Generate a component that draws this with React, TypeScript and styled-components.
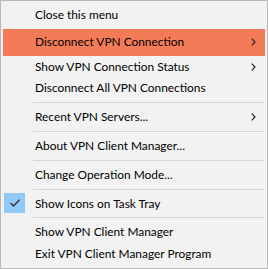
import React from 'react';
import styled, {createGlobalStyle} from 'styled-components';

const GlobalStyle = createGlobalStyle`
  html, body {
    margin: 0;
    padding: 0;
    background: #ffffff;
  }
`;

type Entry =
    | {kind: 'item'; label: string; submenu?: boolean; active?: boolean; checked?: boolean}
    | {kind: 'sep'};

const entries: Entry[] = [
    {kind: 'item', label: 'Close this menu'},
    {kind: 'item', label: 'Disconnect VPN Connection', submenu: true, active: true},
    {kind: 'item', label: 'Show VPN Connection Status', submenu: true},
    {kind: 'item', label: 'Disconnect All VPN Connections'},
    {kind: 'sep'},
    {kind: 'item', label: 'Recent VPN Servers...', submenu: true},
    {kind: 'sep'},
    {kind: 'item', label: 'About VPN Client Manager...'},
    {kind: 'sep'},
    {kind: 'item', label: 'Change Operation Mode...'},
    {kind: 'sep'},
    {kind: 'item', label: 'Show Icons on Task Tray', checked: true},
    {kind: 'sep'},
    {kind: 'item', label: 'Show VPN Client Manager'},
    {kind: 'item', label: 'Exit VPN Client Manager Program'},
];

const Chevron = () => (
    <svg width="5" height="8" viewBox="0 0 5 8">
        <path d="M0.8 0.6 L4 4 L0.8 7.4" fill="none" stroke="#222" strokeWidth="1.2"/>
    </svg>
);

const Check = () => (
    <svg width="12" height="10" viewBox="0 0 12 10">
        <path d="M1.5 5 L4.5 8 L10.5 1.8" fill="none" stroke="#333" strokeWidth="1.4"/>
    </svg>
);

const App = () => {
    return (
        <>
            <GlobalStyle/>
            <Menu>
                {entries.map((e, i) =>
                    e.kind === 'sep' ? (
                        <Separator key={i}/>
                    ) : (
                        <Item key={i} $active={e.active}>
                            <Gutter>{e.checked && <CheckBox><Check/></CheckBox>}</Gutter>
                            <Label>{e.label}</Label>
                            <Arrow>{e.submenu && <Chevron/>}</Arrow>
                        </Item>
                    )
                )}
            </Menu>
        </>
    );
};

const Menu = styled.div`
  box-sizing: border-box;
  width: 268px;
  height: 269px;
  padding: 3px 2px 3px 2px;
  background: #f2f2f2;
  border: 1px solid #b9b9b9;
  font-family: Lato, "Noto Sans", sans-serif;
  font-size: 11.9px;
  color: #000;
  display: flex;
  flex-direction: column;
`;

const Item = styled.div<{ $active?: boolean }>`
  display: flex;
  align-items: center;
  height: ${p => (p.$active ? '27px' : '22px')};
  margin-top: ${p => (p.$active ? '3px' : '0')};
  background: ${p => (p.$active ? '#f47b57' : 'transparent')};
`;

const Gutter = styled.div`
  width: 32px;
  height: 100%;
  display: flex;
  align-items: center;
`;

const CheckBox = styled.div`
  margin-left: 1px;
  width: 21px;
  height: 20px;
  background: #91c9f7;
  display: flex;
  align-items: center;
  justify-content: center;
`;

const Label = styled.span`
  flex: 1;
  white-space: nowrap;
  line-height: 1;
`;

const Arrow = styled.div`
  width: 14px;
  display: flex;
  align-items: center;
`;

const Separator = styled.div`
  height: 7px;
  margin-left: 30px;
  margin-right: 1px;
  display: flex;
  align-items: center;

  &::after {
    content: '';
    flex: 1;
    height: 1px;
    background: #d4d4d4;
  }
`;

export default App;
